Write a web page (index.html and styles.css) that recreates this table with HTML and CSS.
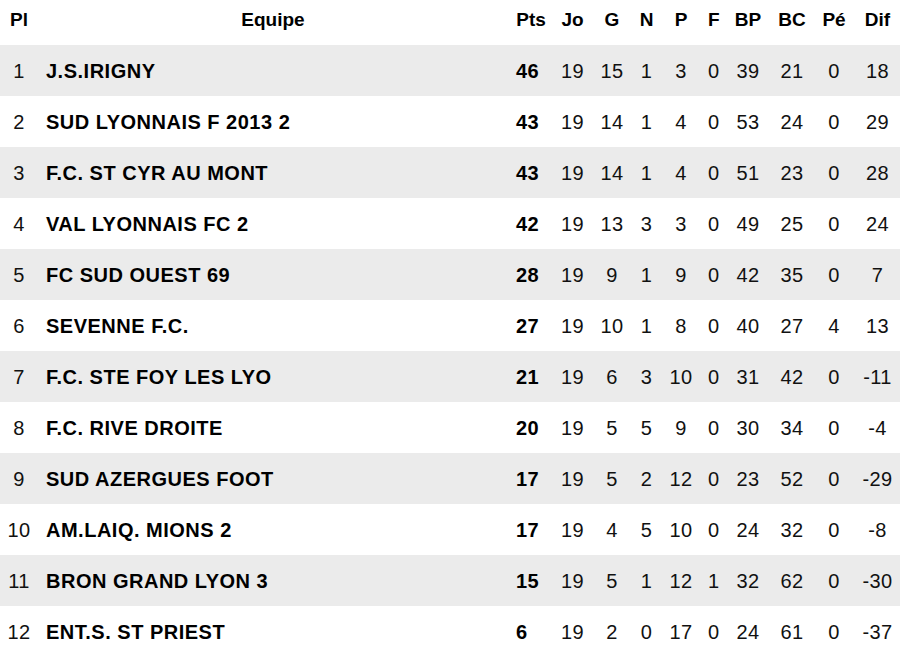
FILE: index.html
```html
<!DOCTYPE html>
<html lang="fr">
<head>
<meta charset="utf-8">
<title>Classement</title>
<link rel="stylesheet" href="styles.css">
</head>
<body>
<table class="ranking">
  <colgroup>
    <col class="c-pl"><col class="c-team"><col class="c-pts"><col class="c-jo"><col class="c-g"><col class="c-n"><col class="c-p"><col class="c-f"><col class="c-bp"><col class="c-bc"><col class="c-pe"><col class="c-dif">
  </colgroup>
  <thead>
    <tr><th>Pl</th><th>Equipe</th><th>Pts</th><th>Jo</th><th>G</th><th>N</th><th>P</th><th>F</th><th>BP</th><th>BC</th><th>Pé</th><th>Dif</th></tr>
  </thead>
  <tbody>
    <tr><td>1</td><td class="team">J.S.IRIGNY</td><td class="pts">46</td><td>19</td><td>15</td><td>1</td><td>3</td><td>0</td><td>39</td><td>21</td><td>0</td><td>18</td></tr>
    <tr><td>2</td><td class="team">SUD LYONNAIS F 2013 2</td><td class="pts">43</td><td>19</td><td>14</td><td>1</td><td>4</td><td>0</td><td>53</td><td>24</td><td>0</td><td>29</td></tr>
    <tr><td>3</td><td class="team">F.C. ST CYR AU MONT</td><td class="pts">43</td><td>19</td><td>14</td><td>1</td><td>4</td><td>0</td><td>51</td><td>23</td><td>0</td><td>28</td></tr>
    <tr><td>4</td><td class="team">VAL LYONNAIS FC 2</td><td class="pts">42</td><td>19</td><td>13</td><td>3</td><td>3</td><td>0</td><td>49</td><td>25</td><td>0</td><td>24</td></tr>
    <tr><td>5</td><td class="team">FC SUD OUEST 69</td><td class="pts">28</td><td>19</td><td>9</td><td>1</td><td>9</td><td>0</td><td>42</td><td>35</td><td>0</td><td>7</td></tr>
    <tr><td>6</td><td class="team">SEVENNE F.C.</td><td class="pts">27</td><td>19</td><td>10</td><td>1</td><td>8</td><td>0</td><td>40</td><td>27</td><td>4</td><td>13</td></tr>
    <tr><td>7</td><td class="team">F.C. STE FOY LES LYO</td><td class="pts">21</td><td>19</td><td>6</td><td>3</td><td>10</td><td>0</td><td>31</td><td>42</td><td>0</td><td>-11</td></tr>
    <tr><td>8</td><td class="team">F.C. RIVE DROITE</td><td class="pts">20</td><td>19</td><td>5</td><td>5</td><td>9</td><td>0</td><td>30</td><td>34</td><td>0</td><td>-4</td></tr>
    <tr><td>9</td><td class="team">SUD AZERGUES FOOT</td><td class="pts">17</td><td>19</td><td>5</td><td>2</td><td>12</td><td>0</td><td>23</td><td>52</td><td>0</td><td>-29</td></tr>
    <tr><td>10</td><td class="team">AM.LAIQ. MIONS 2</td><td class="pts">17</td><td>19</td><td>4</td><td>5</td><td>10</td><td>0</td><td>24</td><td>32</td><td>0</td><td>-8</td></tr>
    <tr><td>11</td><td class="team">BRON GRAND LYON 3</td><td class="pts">15</td><td>19</td><td>5</td><td>1</td><td>12</td><td>1</td><td>32</td><td>62</td><td>0</td><td>-30</td></tr>
    <tr><td>12</td><td class="team">ENT.S. ST PRIEST</td><td class="pts">6</td><td>19</td><td>2</td><td>0</td><td>17</td><td>0</td><td>24</td><td>61</td><td>0</td><td>-37</td></tr>
  </tbody>
</table>
</body>
</html>
```

FILE: styles.css
```css
html, body {
  margin: 0;
  padding: 0;
  background: #ffffff;
}

body {
  font-family: "Liberation Sans", Arial, sans-serif;
  font-size: 20px;
  color: #111111;
}

.ranking {
  width: 900px;
  border-collapse: collapse;
  table-layout: fixed;
}

.c-pl { width: 38px; }
.c-team { width: auto; }
.c-pts { width: 46px; }
.c-jo { width: 37px; }
.c-g { width: 42px; }
.c-n { width: 27px; }
.c-p { width: 42px; }
.c-f { width: 23px; }
.c-bp { width: 46px; }
.c-bc { width: 42px; }
.c-pe { width: 42px; }
.c-dif { width: 45px; }

.ranking th {
  height: 45px;
  padding: 0 6px 5px;
  font-size: 19px;
  font-weight: bold;
  text-align: center;
  color: #000000;
  vertical-align: middle;
  box-sizing: border-box;
}

.ranking td {
  height: 51px;
  padding: 1px 6px 0;
  text-align: center;
  vertical-align: middle;
  letter-spacing: 0.3px;
  white-space: nowrap;
  box-sizing: border-box;
}

.ranking tbody tr:nth-child(odd) {
  background: #ebebeb;
}

.ranking td.team {
  padding-left: 8px;
  text-align: left;
  font-weight: bold;
  letter-spacing: 0.5px;
  color: #000000;
}

.ranking td.pts {
  padding-left: 8px;
  text-align: left;
  font-weight: bold;
  color: #000000;
}
```
